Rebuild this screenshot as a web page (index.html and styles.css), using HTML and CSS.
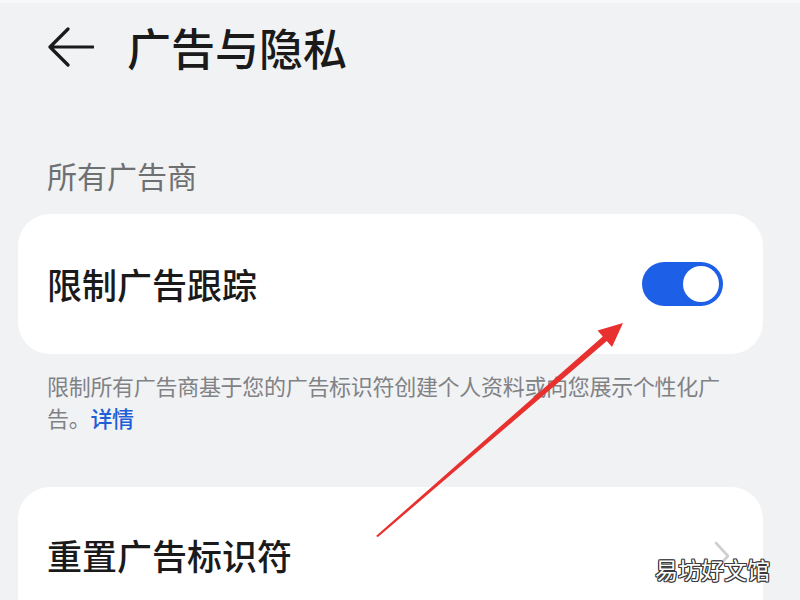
FILE: index.html
```html
<!DOCTYPE html>
<html lang="zh-CN">
<head>
<meta charset="utf-8">
<title>广告与隐私</title>
<link rel="stylesheet" href="styles.css">
</head>
<body>
<div class="page">
  <div class="topline"></div>
  <header class="header">
    <svg class="back" width="46" height="40" viewBox="0 0 46 40">
      <path d="M45 20 H3 M20 2 L2 20 L20 38" fill="none" stroke="#1a1a1a" stroke-width="3.2" stroke-linecap="round" stroke-linejoin="round"/>
    </svg>
    <h1 class="title">广告与隐私</h1>
  </header>

  <div class="section-label">所有广告商</div>

  <div class="card card-toggle">
    <div class="item-text">限制广告跟踪</div>
    <div class="switch"><div class="knob"></div></div>
  </div>

  <p class="desc">限制所有广告商基于您的广告标识符创建个人资料或向您展示个性化广告。<span class="link">详情</span></p>

  <div class="card card-link">
    <div class="item-text">重置广告标识符</div>
    <svg class="chevron" width="16" height="30" viewBox="0 0 16 30">
      <path d="M2 2 L14 15 L2 28" fill="none" stroke="#cfcfd1" stroke-width="2.6" stroke-linecap="round" stroke-linejoin="round"/>
    </svg>
  </div>

  <svg class="annot" width="800" height="600" viewBox="0 0 800 600">
    <polygon points="376,536 602.8,336.4 597.6,330.4 623,323 612,347 606.8,341 378,537" fill="#e8302f"/>
  </svg>

  <div class="watermark">易坊好文馆</div>
</div>
</body>
</html>
```

FILE: styles.css
```css
html, body {
  margin: 0;
  padding: 0;
}
body {
  background: #f1f2f4;
  font-family: "Noto Sans CJK SC", "Noto Sans", sans-serif;
  color: #1a1a1a;
  overflow: hidden;
}
.page {
  position: relative;
  width: 800px;
  height: 600px;
  overflow: hidden;
}
.topline {
  height: 3px;
  background: #f8f8f9;
}
.header {
  height: 87px;
  display: flex;
  align-items: center;
  padding-left: 48px;
  gap: 33px;
}
.back {
  display: block;
}
.title {
  margin: 0;
  font-size: 44px;
  font-weight: 500;
  line-height: 50px;
  letter-spacing: 0;
}
.section-label {
  margin: 65px 0 0 47px;
  font-size: 30px;
  line-height: 40px;
  color: #6f7072;
}
.card {
  background: #ffffff;
  margin: 19px 37px 0 18px;
  border-radius: 32px;
  display: flex;
  align-items: center;
  justify-content: space-between;
  padding: 0 40px 0 29px;
}
.card-toggle {
  height: 140px;
}
.item-text {
  font-size: 35px;
  font-weight: 500;
  line-height: 50px;
  color: #1a1a1a;
}
.switch {
  width: 81px;
  height: 44px;
  border-radius: 22px;
  background: #1d5fe6;
  display: flex;
  align-items: center;
  justify-content: flex-end;
  padding-right: 4px;
  box-sizing: border-box;
}
.knob {
  width: 36px;
  height: 36px;
  border-radius: 50%;
  background: #ffffff;
}
.desc {
  margin: 15px 60px 0 47px;
  font-size: 22px;
  line-height: 32px;
  letter-spacing: -0.3px;
  color: #818285;
}
.link {
  color: #1f5fd6;
  font-weight: 500;
}
.card-link {
  margin-top: 54px;
  height: 200px;
  align-items: flex-start;
  padding-top: 43px;
  padding-right: 33px;
  box-sizing: border-box;
}
.chevron {
  margin-top: 11px;
}
.annot {
  position: absolute;
  left: 0;
  top: 0;
  pointer-events: none;
}
.watermark {
  position: absolute;
  left: 655px;
  top: 553px;
  font-size: 23px;
  line-height: 32px;
  color: #ffffff;
  letter-spacing: 0;
  text-shadow: 1px 0 0 #3a3a3a, -1px 0 0 #3a3a3a, 0 1px 0 #3a3a3a, 0 -1px 0 #3a3a3a, 1px 1px 0 #3a3a3a, -1px -1px 0 #3a3a3a, 1px -1px 0 #3a3a3a, -1px 1px 0 #3a3a3a;
}
```
